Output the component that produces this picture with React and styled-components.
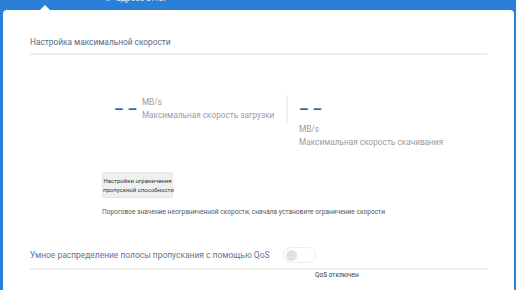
import React from "react";
import styled, { createGlobalStyle } from "styled-components";

const Global = createGlobalStyle`
  html, body { margin: 0; padding: 0; height: 100%; }
  body {
    background: #2b7fd7;
    font-family: Roboto, "Noto Sans", sans-serif;
    overflow: hidden;
  }
  #root { height: 100%; }
`;

const Page = styled.div`
  display: flex;
  flex-direction: column;
  height: 290px;
`;

const TopBar = styled.div`
  display: flex;
  align-items: flex-end;
  height: 10px;
  overflow: hidden;
  flex: 0 0 10px;
`;

const Notch = styled.div`
  width: 0;
  height: 0;
  margin-left: 40px;
  border-left: 5px solid transparent;
  border-right: 5px solid transparent;
  border-bottom: 5px solid #ffffff;
`;

const TabLabel = styled.div`
  margin-left: 56px;
  align-self: flex-start;
  margin-top: -8px;
  font-size: 8.5px;
  line-height: 12px;
  color: rgba(255, 255, 255, 0.85);
  white-space: nowrap;
`;

const Card = styled.div`
  flex: 1;
  margin: 0 2px 0 3px;
  background: #ffffff;
  border-radius: 4px 4px 0 0;
  padding: 25px 27px 0 27px;
  display: flex;
  flex-direction: column;
`;

const SectionTitle = styled.div`
  font-size: 8.3px;
  line-height: 14px;
  color: #4f6c8d;
  padding-bottom: 4px;
  border-bottom: 2px solid #ededed;
`;

const SpeedRow = styled.div`
  display: flex;
  align-items: flex-start;
  margin-top: 40px;
`;

const LeftGroup = styled.div`
  display: flex;
  align-items: center;
  flex: 0 0 172px;
  min-width: 0;
  margin-left: 84px;
  height: 28px;
  gap: 5px;
`;

const Value = styled.div`
  font-size: 15px;
  font-weight: 700;
  letter-spacing: 4px;
  margin-right: -4px;
  color: #2e62ad;
  line-height: 28px;
  white-space: nowrap;
`;

const Unit = styled.div`
  display: flex;
  flex-direction: column;
  font-size: 8.25px;
  line-height: 13px;
  color: #9b9b9b;
  white-space: nowrap;
`;

const VDivider = styled.div`
  flex: 0 0 2px;
  height: 28px;
  background: #efefef;
`;

const RightGroup = styled.div`
  display: flex;
  flex-direction: column;
  align-items: flex-start;
  padding-left: 11px;
`;

const LimitButton = styled.button`
  align-self: flex-start;
  margin: 23px 0 0 72px;
  width: 71px;
  height: 26px;
  padding: 0;
  border: 1px solid #e6e6e6;
  border-radius: 2px;
  background: #efefef;
  font-family: inherit;
  font-size: 6px;
  line-height: 9px;
  color: #333333;
  white-space: nowrap;
`;

const Hint = styled.div`
  margin: 9px 0 0 72px;
  font-size: 6.6px;
  line-height: 10px;
  color: #555555;
  white-space: nowrap;
`;

const QosRow = styled.div`
  display: flex;
  align-items: center;
  margin-top: 30px;
  padding-bottom: 5px;
  border-bottom: 2px solid #ededed;
`;

const QosLabel = styled.div`
  font-size: 8.45px;
  line-height: 16px;
  color: #5878a0;
  white-space: nowrap;
`;

const Toggle = styled.div`
  margin-left: 13px;
  width: 33px;
  height: 16px;
  box-sizing: border-box;
  border: 1px solid #ececec;
  border-radius: 8px;
  background: #ffffff;
  display: flex;
  align-items: center;
  padding-left: 2px;
`;

const Knob = styled.div`
  width: 11px;
  height: 11px;
  border-radius: 50%;
  background: #e2e2e2;
`;

const QosStatus = styled.div`
  margin: 0 0 0 285px;
  font-size: 6.5px;
  line-height: 10px;
  color: #333333;
  white-space: nowrap;
`;

export default function App() {
  return (
    <>
      <Global />
      <Page>
        <TopBar>
          <Notch />
          <TabLabel>IP-адреса DHCP</TabLabel>
        </TopBar>
        <Card>
          <SectionTitle>Настройка максимальной скорости</SectionTitle>
          <SpeedRow>
            <LeftGroup>
              <Value>––</Value>
              <Unit>
                <span>MB/s</span>
                <span>Максимальная скорость загрузки</span>
              </Unit>
            </LeftGroup>
            <VDivider />
            <RightGroup>
              <Value>––</Value>
              <Unit>
                <span>MB/s</span>
                <span>Максимальная скорость скачивания</span>
              </Unit>
            </RightGroup>
          </SpeedRow>
          <LimitButton>
            Настройки ограничения
            <br />
            пропускной способности
          </LimitButton>
          <Hint>
            Пороговое значение неограниченной скорости, сначала установите ограничение скорости
          </Hint>
          <QosRow>
            <QosLabel>Умное распределение полосы пропускания с помощью QoS</QosLabel>
            <Toggle>
              <Knob />
            </Toggle>
          </QosRow>
          <QosStatus>QoS отключен</QosStatus>
        </Card>
      </Page>
    </>
  );
}
